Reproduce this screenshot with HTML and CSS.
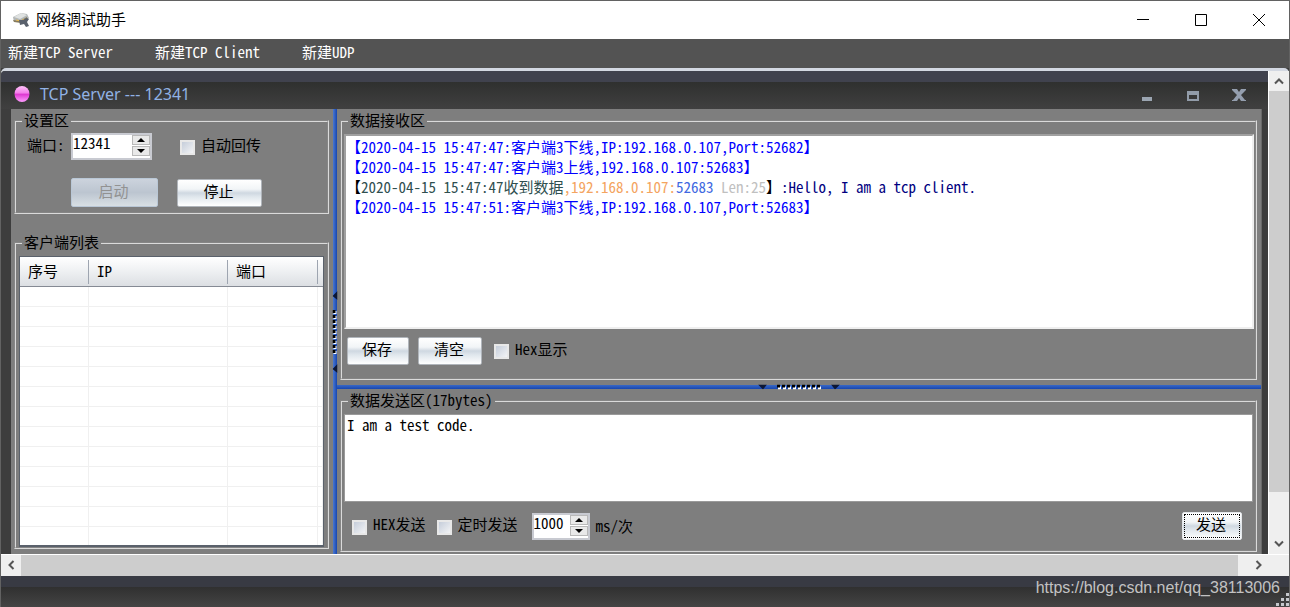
FILE: index.html
```html
<!DOCTYPE html>
<html lang="zh-CN">
<head>
<meta charset="utf-8">
<title>网络调试助手</title>
<link rel="stylesheet" href="styles.css">
</head>
<body>
<header class="titlebar">
  <svg class="app-icon" width="18" height="16" viewBox="0 0 18 16" aria-hidden="true">
    <path d="M1 5 9 1l6 1 2 4-5 4-10 0z" fill="#b4b8b8"/>
    <path d="M2 5 9 1l6 2-7 4z" fill="#dfe2e1"/>
    <path d="m1 8 7 1 7-4v2l-6 4-7-1z" fill="#857a5c"/>
    <path d="m4 8 5 1 3-2" stroke="#e8b749" fill="none"/>
    <path d="m7 8 4 0 4-2 2 1-2 3 2 4-3 1-2-3-4 1z" fill="#59616c"/>
  </svg>
  <h1 class="app-title">网络调试助手</h1>
  <div class="window-buttons">
    <button class="window-button" aria-label="最小化"><svg width="12" height="12"><path d="M0 5.500h12" stroke="#000"/></svg></button>
    <button class="window-button" aria-label="最大化"><svg width="12" height="12"><path d="M.5.5h11v11H.5z" stroke="#000" fill="none"/></svg></button>
    <button class="window-button" aria-label="关闭"><svg width="12" height="12"><path d="m0 0 12 12M12 0 0 12" stroke="#000"/></svg></button>
  </div>
</header>
<nav class="menubar">
  <button class="menu-item">新建TCP Server</button>
  <button class="menu-item">新建TCP Client</button>
  <button class="menu-item">新建UDP</button>
</nav>
<div class="workspace">
  <main class="child">
    <header class="child-bar">
      <svg width="16" height="18" viewBox="0 0 16 18" aria-hidden="true">
        <defs><linearGradient id="orb" x2="0" y2="1"><stop stop-color="#ffc2fa"/><stop offset=".45" stop-color="#f47bea"/><stop offset=".5" stop-color="#dd35cf"/><stop offset="1" stop-color="#ff9cff"/></linearGradient></defs>
        <ellipse cx="8" cy="8" rx="7.500" ry="8" fill="url(#orb)"/>
      </svg>
      <h2 class="child-title">TCP Server --- 12341</h2>
      <div class="child-buttons">
        <button class="child-button" aria-label="最小化"><svg width="14" height="14"><path d="M2 9h10v4H2z" fill="#9ba5b1"/></svg></button>
        <button class="child-button" aria-label="还原"><svg width="14" height="14"><path d="M1 3h12v10H1zM3 7v4h8V7z" fill="#929ca9" fill-rule="evenodd"/></svg></button>
        <button class="child-button" aria-label="关闭"><svg width="14" height="14"><path d="M0 1h5l2 3 2-3h5v1L9 7l4 5h1v1H9l-2-3-2 3H0v-1h1l4-5-5-5z" fill="#949eae"/></svg></button>
      </div>
    </header>
    <div class="panes">
      <section class="side">
        <fieldset class="group">
          <legend>设置区</legend>
          <div class="settings-row">
            <label class="port-label" for="port">端口:</label>
            <span class="spin spin-port">
              <input id="port" type="text" inputmode="numeric" value="12341">
              <span class="steps"><button aria-label="增加端口"><svg width="8" height="4"><path d="m0 4 4-4 4 4z"/></svg></button><button aria-label="减少端口"><svg width="8" height="4"><path d="m0 0 4 4 4-4z"/></svg></button></span>
            </span>
            <input class="check check-echo" type="checkbox" id="echo"><label for="echo">自动回传</label>
          </div>
          <div class="settings-actions">
            <button class="btn btn-start" disabled>启动</button>
            <button class="btn btn-stop">停止</button>
          </div>
        </fieldset>
        <fieldset class="group clients">
          <legend>客户端列表</legend>
          <div class="table-frame">
            <table class="client-table">
              <colgroup><col class="col-no"><col class="col-ip"><col class="col-port"><col></colgroup>
              <thead><tr><th>序号</th><th>IP</th><th>端口</th><th></th></tr></thead>
              <tbody>
                <tr><td></td><td></td><td></td><td></td></tr>
                <tr><td></td><td></td><td></td><td></td></tr>
                <tr><td></td><td></td><td></td><td></td></tr>
                <tr><td></td><td></td><td></td><td></td></tr>
                <tr><td></td><td></td><td></td><td></td></tr>
                <tr><td></td><td></td><td></td><td></td></tr>
                <tr><td></td><td></td><td></td><td></td></tr>
                <tr><td></td><td></td><td></td><td></td></tr>
                <tr><td></td><td></td><td></td><td></td></tr>
                <tr><td></td><td></td><td></td><td></td></tr>
                <tr><td></td><td></td><td></td><td></td></tr>
                <tr><td></td><td></td><td></td><td></td></tr>
                <tr><td></td><td></td><td></td><td></td></tr>
              </tbody>
            </table>
          </div>
        </fieldset>
      </section>
      <div class="split split-v">
        <svg width="5" height="82" viewBox="0 0 5 82" aria-hidden="true">
          <path d="M5 0v9L0 5zM5 73v9l-5-4z" fill="#0b1636"/>
          <path d="M2.500 20v45" stroke="#fff" stroke-width="3" stroke-dasharray="3 2"/>
          <path d="M1.500 19v45" stroke="#000" stroke-width="3" stroke-dasharray="3 2"/>
        </svg>
      </div>
      <section class="work">
        <fieldset class="group receive">
          <legend>数据接收区</legend>
          <div class="log" role="log">
            <p class="event">【2020-04-15 15:47:47:客户端3下线,IP:192.168.0.107,Port:52682】</p>
            <p class="event">【2020-04-15 15:47:47:客户端3上线,192.168.0.107:52683】</p>
            <p>【<span class="stamp">2020-04-15 15:47:47收到数据</span><span class="address">,192.168.0.107:</span><span class="remote-port">52683</span><span class="length"> Len:25</span>】<span class="payload">:Hello, I am a tcp client.</span></p>
            <p class="event">【2020-04-15 15:47:51:客户端3下线,IP:192.168.0.107,Port:52683】</p>
          </div>
          <div class="receive-actions">
            <button class="btn btn-save">保存</button>
            <button class="btn btn-clear">清空</button>
            <input class="check" type="checkbox" id="hexshow"><label for="hexshow">Hex显示</label>
          </div>
        </fieldset>
        <div class="split split-h">
          <svg width="82" height="5" viewBox="0 0 82 5" aria-hidden="true">
            <path d="M0 0h9L5 5zM73 0h9l-5 5z" fill="#0b1636"/>
            <path d="M20 3.500h45" stroke="#fff" stroke-width="3" stroke-dasharray="3 2"/>
            <path d="M19 1.500h45" stroke="#000" stroke-width="3" stroke-dasharray="3 2"/>
          </svg>
        </div>
        <fieldset class="group send">
          <legend>数据发送区(17bytes)</legend>
          <textarea class="message" aria-label="发送数据">I am a test code.</textarea>
          <div class="send-actions">
            <input class="check" type="checkbox" id="hexsend"><label for="hexsend">HEX发送</label>
            <input class="check check-timer" type="checkbox" id="timer"><label for="timer">定时发送</label>
            <span class="spin spin-time">
              <input id="interval" type="text" inputmode="numeric" value="1000">
              <span class="steps"><button aria-label="增加间隔"><svg width="8" height="4"><path d="m0 4 4-4 4 4z"/></svg></button><button aria-label="减少间隔"><svg width="8" height="4"><path d="m0 0 4 4 4-4z"/></svg></button></span>
            </span>
            <label class="unit" for="interval">ms/次</label>
            <button class="btn btn-send">发送</button>
          </div>
        </fieldset>
      </section>
    </div>
  </main>
  <div class="scroll scroll-v">
    <button class="arrow" aria-label="向上滚动"><svg width="10" height="8"><path d="m1 6.500 4-4 4 4" /></svg></button>
    <span class="thumb"></span>
    <button class="arrow arrow-down" aria-label="向下滚动"><svg width="10" height="8"><path d="m1 1.500 4 4 4-4"/></svg></button>
  </div>
  <div class="scroll scroll-h">
    <button class="arrow" aria-label="向左滚动"><svg width="8" height="10"><path d="m6.500 1-4 4 4 4"/></svg></button>
    <span class="thumb"></span>
    <button class="arrow arrow-right" aria-label="向右滚动"><svg width="8" height="10"><path d="m1.500 1 4 4-4 4"/></svg></button>
  </div>
</div>
<footer class="status">
  <span>https://blog.csdn.net/qq_38113006</span>
  <svg class="grip" width="14" height="14" aria-hidden="true"><path d="M11 0h3v3h-3zM6 5h3v3H6zM11 5h3v3h-3zM1 10h3v3H1zM6 10h3v3H6zM11 10h3v3h-3z" fill="#c5c8cc"/></svg>
</footer>
</body>
</html>
```
FILE: styles.css
```css
* { box-sizing: border-box; }
body {
  margin: 0;
  height: 100vh;
  display: flex;
  flex-direction: column;
  overflow: hidden;
  border: 1px solid #626262;
  border-bottom: 0;
  background: #3c3c3c;
  color: #000;
  font: 15px/20px "Noto Sans CJK SC", sans-serif;
  font-feature-settings: "hwid";
}
button, input, textarea {
  margin: 0;
  padding: 0;
  border: 0;
  border-radius: 0;
  background: none;
  color: inherit;
  font: inherit;
  font-feature-settings: inherit;
}
h1, h2, p { margin: 0; font: inherit; }
svg { display: block; }

.titlebar {
  display: flex;
  align-items: center;
  height: 38px;
  padding: 0 1px 0 11px;
  background: #fff;
}
.app-title { margin: 0 0 2px 6px; }
.window-buttons { display: flex; margin-left: auto; }
.window-button { display: grid; place-items: center; width: 58px; height: 38px; }

.menubar {
  display: flex;
  gap: 42px;
  height: 29px;
  padding: 0 7px 4px;
  background: #535353;
  color: #fff;
}

.workspace {
  flex: 1;
  display: grid;
  grid-template: 1fr 22px / 1fr 21px;
  min-height: 0;
  border-top: 3px solid #d3d8e2;
  border-radius: 5px 5px 0 0;
  background: #efefef;
}
.child { display: flex; flex-direction: column; min-width: 0; min-height: 0; background: #3d3d3d; border-radius: 4px 0 0; }
.child-bar {
  display: flex;
  align-items: center;
  height: 38px;
  padding: 9px 22px 0 13px;
  border-radius: 4px 0 0;
  background: linear-gradient(#40424e 11px, #2f302f 11px, #404040);
}
.child-title {
  margin: 0 0 2px 10px;
  color: #91b2e5;
  font: 16px/22px "Noto Sans", sans-serif;
}
.child-buttons { display: flex; gap: 32px; margin-left: auto; }
.child-button { width: 14px; height: 14px; }

.panes {
  flex: 1;
  display: flex;
  min-height: 0;
  margin: 0 6px 0 4px;
  border: solid #696969;
  border-width: 0 1px 0 0;
  padding-left: 6px;
  background: linear-gradient(90deg, #3d3d3d 6px, #7e7e7e 6px);
}
.side { display: flex; flex-direction: column; width: 322px; padding: 3px 4px 5px 3px; }
.work { flex: 1; display: flex; flex-direction: column; min-width: 0; }

.group {
  min-width: 0;
  margin: 0;
  padding: 0;
  border: 2px groove #dadada;
}
.group legend { margin-left: 6px; padding: 0 2px 2px; line-height: 16px; }
.settings-row { display: flex; align-items: center; height: 30px; margin-top: 1px; padding-left: 11px; }
.settings-row label { padding-bottom: 3px; }
.port-label { width: 44px; }
.spin {
  display: flex;
  height: 27px;
  border: 2px solid #c8cad1;
  background: #fff;
}
.spin-port { width: 81px; }
.spin-time { width: 58px; margin-left: 14px; }
.spin input { flex: 1; width: 0; height: 16px; line-height: 16px; }
.steps { display: flex; flex-direction: column; width: 18px; height: 21px; gap: 1px; }
.steps button {
  flex: 1;
  display: grid;
  place-items: center;
  border: 1px solid #b9b9b9;
  background: #e9e9e9;
}
.check {
  appearance: none;
  width: 15px;
  height: 15px;
  margin-top: 2px;
  margin-right: 6px;
  border: 2px solid #e8e8e8;
  background: linear-gradient(135deg, #c5cdda, #f2f3f5);
}
.check-echo { margin-left: 28px; }
.settings-actions { display: flex; align-items: center; gap: 19px; height: 51px; padding: 12px 0 0 55px; }
.btn {
  height: 28px;
  border: 1px solid #b0b5bb;
  border-radius: 2px;
  background: linear-gradient(#fff, #f2f5f7 35%, #cfd8e1 50%, #e0e7ed 65%, #fff);
  line-height: 22px;
  padding: 0 2px 4px 0;
}
.btn:disabled {
  border-color: #b9c7d6;
  background: linear-gradient(#ccd3dd, #bcc5d0 50%, #d8dfe4);
  color: #929292;
}
.btn-start { width: 87px; height: 29px; }
.btn-stop { width: 85px; }

.clients { flex: 1; display: flex; flex-direction: column; margin-top: 20px; min-height: 0; }
.table-frame {
  flex: 1;
  min-height: 0;
  margin: 4px 3px 0;
  overflow: hidden;
  border: 1px solid #5a616b;
  border-bottom-width: 2px;
  background: #fff;
}
.client-table { width: 100%; table-layout: fixed; border-collapse: separate; border-spacing: 0; }
.col-no { width: 69px; }
.col-ip { width: 139px; }
.col-port { width: 90px; }
.client-table th {
  height: 30px;
  padding: 0 8px 2px;
  border-bottom: 1px solid #858a94;
  background: linear-gradient(#9ea5b0, #9ea5b0) right / 1px 24px no-repeat, linear-gradient(#fff, #eef0f2 50%, #dcdfe3);
  font-weight: 400;
  text-align: left;
}
.client-table th:last-child { background: linear-gradient(#fff, #eef0f2 50%, #dcdfe3); padding: 0; }
.client-table td { height: 20px; padding: 0; border: solid #f0f0f0; border-width: 0 1px 1px 0; }

.split { position: relative; background: linear-gradient(90deg, #4a78d0, #1746b0); }
.split svg { position: absolute; top: 50%; left: 50%; transform: translate(-50%, -50%); }
.split-v { width: 4px; }
.split-h { height: 4px; background: linear-gradient(#3968c6, #1746b0); }

.receive { flex: 1; display: flex; flex-direction: column; margin: 3px 4px 5px 3px; min-height: 0; }
.log {
  flex: 1;
  overflow: auto;
  margin: 4px 1px 0 2px;
  padding: 1px 0;
  border: 2px solid #efefef;
  border-top-color: #a0a0a0;
  border-left-color: #a0a0a0;
  background: #fff;
}
.event { color: #00f; }
.stamp { color: #2f4f4f; }
.address { color: #f4a460; }
.remote-port { color: #4169e1; }
.length { color: #c0c0c0; }
.payload { color: #000080; }
.receive-actions { display: flex; align-items: center; height: 49px; padding: 0 0 6px 5px; }
.receive-actions label { padding-bottom: 4px; }
.btn-save { width: 62px; }
.btn-clear { width: 64px; margin: 0 12px 0 9px; }

.send { margin: 3px 4px 2px 3px; }
.message {
  display: block;
  width: calc(100% - 4px);
  height: 88px;
  margin: 4px 2px 0;
  padding: 0 2px;
  border: 1px solid #9a9a9a;
  background: #fff;
  resize: none;
}
.send-actions { display: flex; align-items: center; height: 48px; padding: 0 13px 0 10px; }
.send-actions label { padding-bottom: 4px; }
.check-timer { margin-left: 11px; }
.send-actions .unit { margin-left: 6px; padding-bottom: 0; }
.btn-send {
  width: 60px;
  margin-left: auto;
  border-color: #e3e6e9;
  outline: 1px dotted #000;
  outline-offset: -3px;
}

.scroll { display: flex; background: #efefef; }
.scroll-v { flex-direction: column; border-left: 1px solid #fff; }
.scroll-h { grid-column: 1 / -1; border-top: 1px solid #fff; padding-right: 21px; }
.arrow { display: grid; place-items: center; width: 20px; height: 20px; }
.arrow path { fill: none; stroke: #555; stroke-width: 2; }
.thumb { flex: 1; background: #cdcdcd; }
.scroll-v .arrow-down { height: 62px; place-items: end center; padding-bottom: 6px; }
.scroll-h .arrow-right { width: 30px; place-items: center end; padding-right: 5px; }

.status {
  position: relative;
  display: flex;
  justify-content: flex-end;
  height: 31px;
  padding: 2px 9px 0 0;
  background: linear-gradient(#383a43 11px, #303030 11px, #444);
  color: #c2c2c2;
  font: 16px/20px "Liberation Sans", sans-serif;
}
.grip { position: absolute; right: 0; bottom: 0; }
```
